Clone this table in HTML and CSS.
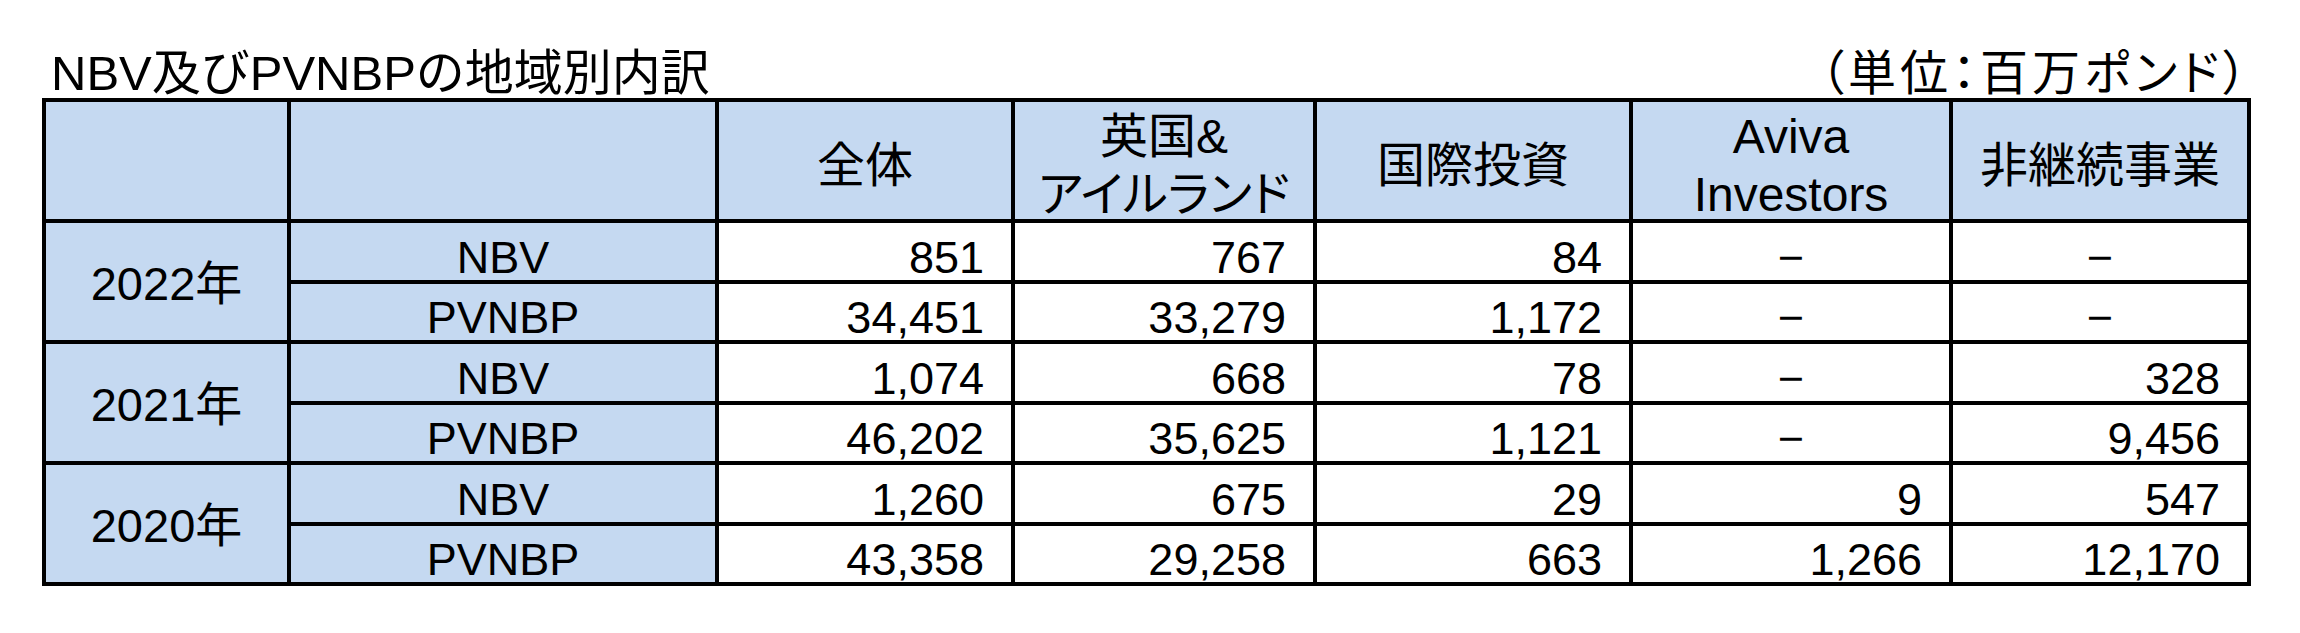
FILE: index.html
```html
<!DOCTYPE html>
<html lang="ja">
<head>
<meta charset="utf-8">
<title>NBV及びPVNBPの地域別内訳</title>
<link rel="stylesheet" href="styles.css">
</head>
<body>
<div class="page">
  <div class="caption">
    <h1 class="title">NBV及びPVNBPの地域別内訳</h1>
    <div class="unit">（単位：百万ポンド）</div>
  </div>
  <div class="grid">
    <div class="hd"></div>
    <div class="hd"></div>
    <div class="hd"><span>全体</span></div>
    <div class="hd"><span>英国&amp;<br>アイルランド</span></div>
    <div class="hd"><span>国際投資</span></div>
    <div class="hd"><span>Aviva<br>Investors</span></div>
    <div class="hd"><span>非継続事業</span></div>

    <div class="yr">2022年</div>
    <div class="lb">NBV</div>
    <div class="num">851</div>
    <div class="num">767</div>
    <div class="num">84</div>
    <div class="num dash">−</div>
    <div class="num dash">−</div>

    <div class="lb">PVNBP</div>
    <div class="num">34,451</div>
    <div class="num">33,279</div>
    <div class="num">1,172</div>
    <div class="num dash">−</div>
    <div class="num dash">−</div>

    <div class="yr">2021年</div>
    <div class="lb">NBV</div>
    <div class="num">1,074</div>
    <div class="num">668</div>
    <div class="num">78</div>
    <div class="num dash">−</div>
    <div class="num">328</div>

    <div class="lb">PVNBP</div>
    <div class="num">46,202</div>
    <div class="num">35,625</div>
    <div class="num">1,121</div>
    <div class="num dash">−</div>
    <div class="num">9,456</div>

    <div class="yr">2020年</div>
    <div class="lb">NBV</div>
    <div class="num">1,260</div>
    <div class="num">675</div>
    <div class="num">29</div>
    <div class="num">9</div>
    <div class="num">547</div>

    <div class="lb">PVNBP</div>
    <div class="num">43,358</div>
    <div class="num">29,258</div>
    <div class="num">663</div>
    <div class="num">1,266</div>
    <div class="num">12,170</div>
  </div>
</div>
</body>
</html>
```

FILE: styles.css
```css
html, body {
  margin: 0;
  padding: 0;
  background: #ffffff;
}

body {
  font-family: "Liberation Sans", "Noto Sans CJK JP", sans-serif;
  color: #000000;
}

.page {
  padding-top: 45px;
  padding-left: 42px;
}

.caption {
  width: 2209px;
  box-sizing: border-box;
  display: flex;
  justify-content: space-between;
  align-items: flex-start;
  padding-left: 9px;
  padding-right: 0;
}

.title {
  margin: 0;
  padding-top: 4px;
  font-family: "Liberation Sans", "Noto Sans CJK JP", sans-serif;
  font-size: 49px;
  line-height: 48px;
  font-weight: 400;
  white-space: nowrap;
}

.unit {
  font-family: "Noto Sans CJK JP", sans-serif;
  font-size: 48px;
  line-height: 48px;
  letter-spacing: 4px;
  font-feature-settings: "palt";
  white-space: nowrap;
}

.grid {
  margin-top: 1px;
  display: grid;
  grid-template-columns: 241px 424px 292px 298px 312px 316px 294px;
  grid-template-rows: 117px 57px 56px 57px 56px 57px 56px;
  gap: 4px;
  padding: 4px;
  background: #000000;
  width: max-content;
}

.hd {
  background: #c5d9f1;
  display: flex;
  flex-direction: column;
  justify-content: center;
  align-items: center;
  text-align: center;
  font-size: 48px;
  line-height: 58px;
  padding-top: 10px;
  box-sizing: border-box;
  font-feature-settings: "palt";
  white-space: nowrap;
}

.yr {
  grid-row: span 2;
  background: #c5d9f1;
  display: flex;
  justify-content: center;
  align-items: center;
  font-size: 47px;
  line-height: 47px;
  padding-top: 4px;
  box-sizing: border-box;
}

.lb {
  background: #c5d9f1;
  display: flex;
  justify-content: center;
  align-items: flex-end;
  font-size: 45px;
  line-height: 45px;
}

.num {
  background: #ffffff;
  display: flex;
  justify-content: flex-end;
  align-items: flex-end;
  padding-right: 27px;
  font-size: 45px;
  line-height: 45px;
}

.num.dash {
  justify-content: center;
  padding-right: 0;
}
```
